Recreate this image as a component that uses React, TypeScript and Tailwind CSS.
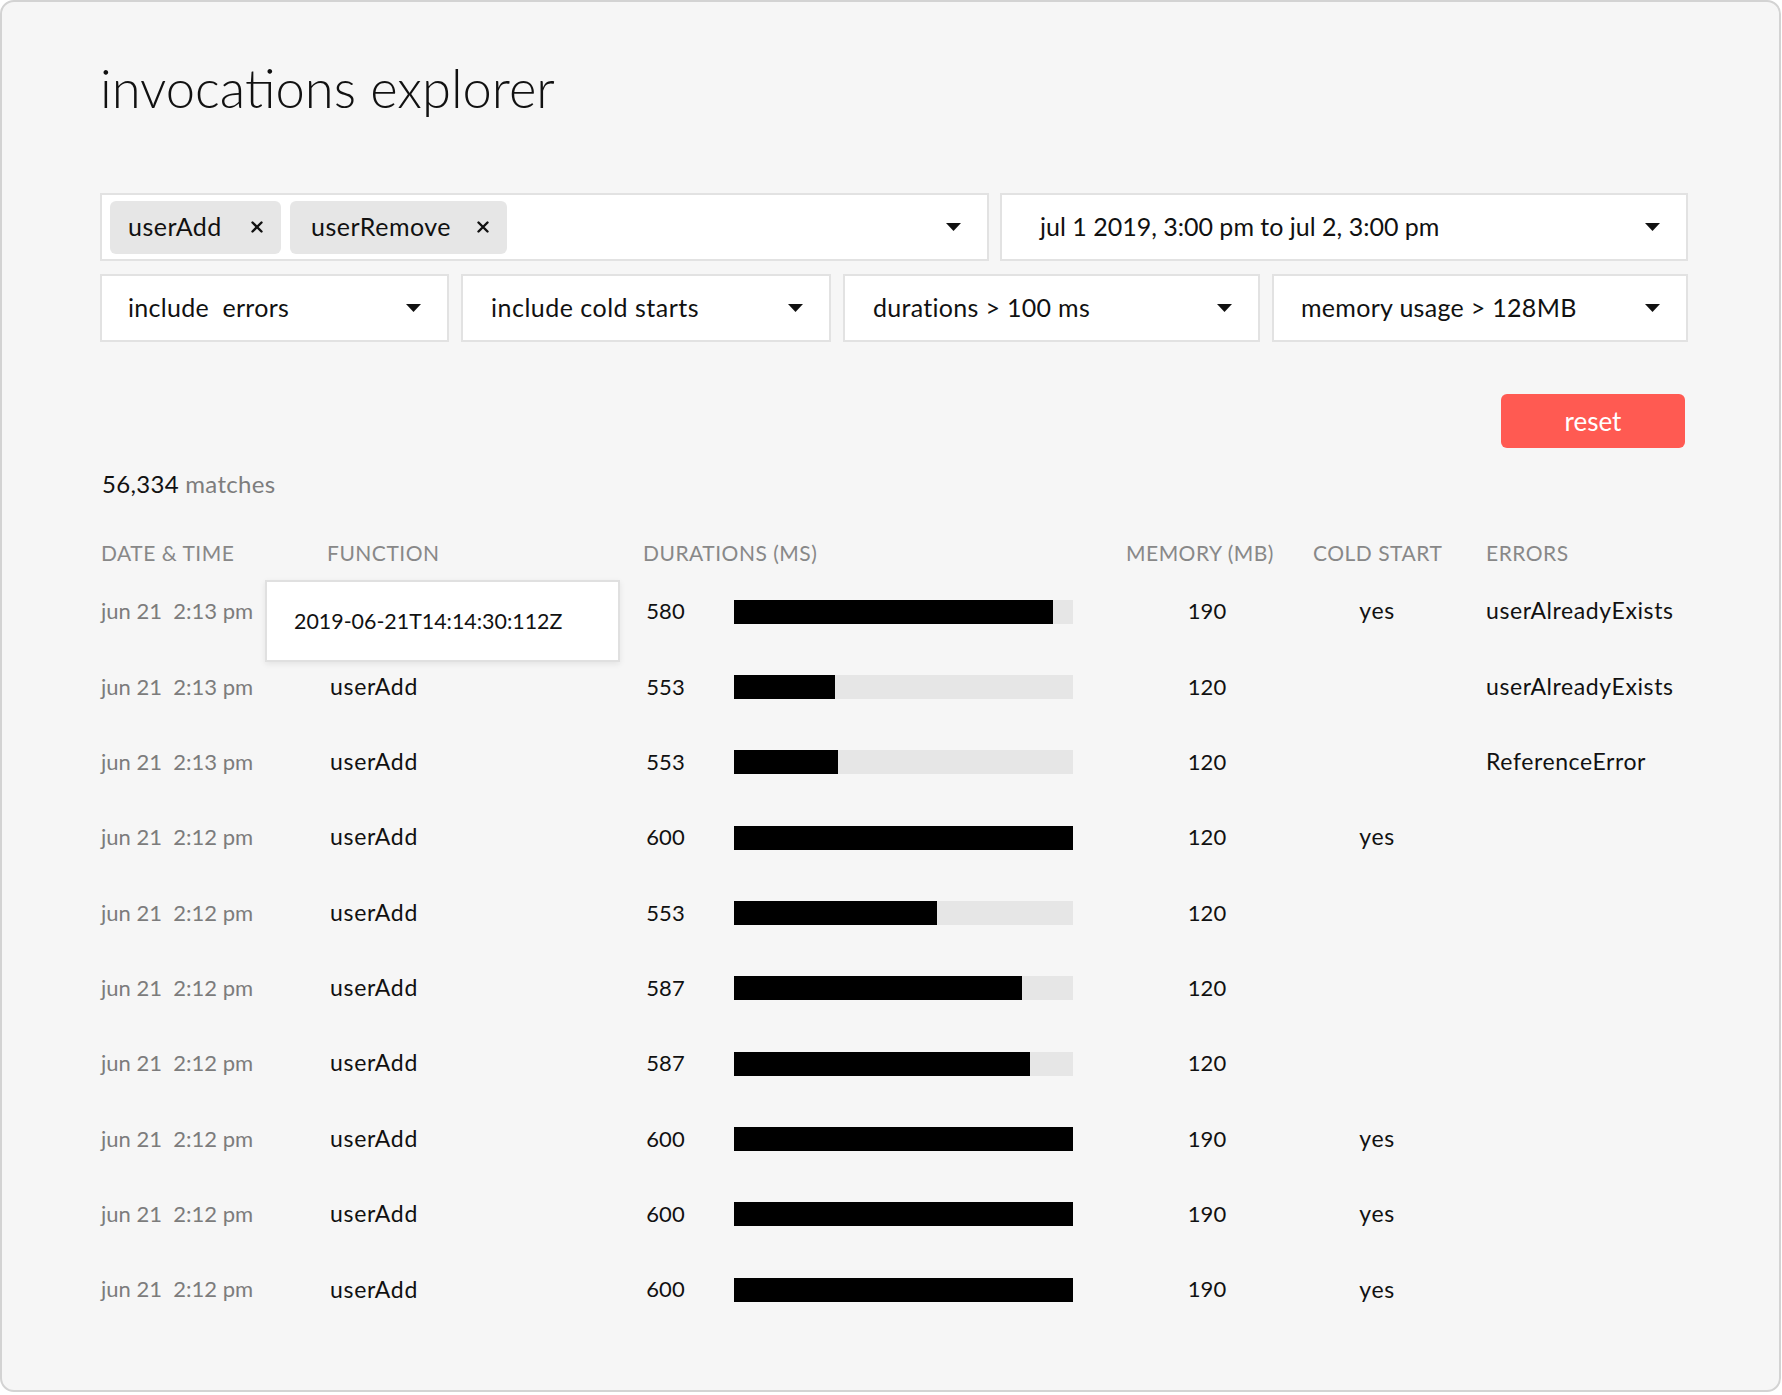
import React from "react";

type Row = {
  d: string;
  f: string;
  ms: number;
  p: number;
  mem: number;
  cold: boolean;
  err: string;
};

const rows: Row[] = [
  { d: "jun 21  2:13 pm", f: "userAdd", ms: 580, p: 0.941, mem: 190, cold: true, err: "userAlreadyExists" },
  { d: "jun 21  2:13 pm", f: "userAdd", ms: 553, p: 0.298, mem: 120, cold: false, err: "userAlreadyExists" },
  { d: "jun 21  2:13 pm", f: "userAdd", ms: 553, p: 0.308, mem: 120, cold: false, err: "ReferenceError" },
  { d: "jun 21  2:12 pm", f: "userAdd", ms: 600, p: 1, mem: 120, cold: true, err: "" },
  { d: "jun 21  2:12 pm", f: "userAdd", ms: 553, p: 0.6, mem: 120, cold: false, err: "" },
  { d: "jun 21  2:12 pm", f: "userAdd", ms: 587, p: 0.85, mem: 120, cold: false, err: "" },
  { d: "jun 21  2:12 pm", f: "userAdd", ms: 587, p: 0.874, mem: 120, cold: false, err: "" },
  { d: "jun 21  2:12 pm", f: "userAdd", ms: 600, p: 1, mem: 190, cold: true, err: "" },
  { d: "jun 21  2:12 pm", f: "userAdd", ms: 600, p: 1, mem: 190, cold: true, err: "" },
  { d: "jun 21  2:12 pm", f: "userAdd", ms: 600, p: 1, mem: 190, cold: true, err: "" },
];

function Caret() {
  return (
    <svg width="15" height="8" viewBox="0 0 15 8" className="shrink-0">
      <polygon points="0,0 15,0 7.5,8" fill="#111" />
    </svg>
  );
}

function Cross() {
  return (
    <svg width="12" height="12" viewBox="0 0 12 12" className="shrink-0">
      <path d="M1.5 1.5 L10.5 10.5 M10.5 1.5 L1.5 10.5" stroke="#111" strokeWidth="2.4" strokeLinecap="round" />
    </svg>
  );
}

function Chip({ label, width, pad }: { label: string; width: string; pad: string }) {
  return (
    <div className={`flex h-[53px] items-center justify-between rounded-[6px] bg-[#e6e6e6] pr-[18px] ${pad} ${width}`}>
      <span className="text-[25px] tracking-[0.5px] text-[#111]">{label}</span>
      <Cross />
    </div>
  );
}

function Select({ label, className, pad, track = "tracking-[0.3px]" }: { label: string; className: string; pad: string; track?: string }) {
  return (
    <div className={`flex h-[68px] items-center justify-between border-2 border-[#e2e2e2] bg-white pr-[26px] ${pad} ${className}`}>
      <span className={`whitespace-pre text-[25px] text-[#111] ${track}`}>{label}</span>
      <Caret />
    </div>
  );
}

export default function App() {
  return (
    <div className="h-[1395px] w-[1782px] bg-white" style={{ fontFamily: "Lato, 'Open Sans', sans-serif" }}>
      <div className="h-[1392px] w-[1781px] rounded-[14px] border-2 border-[#d3d3d3] bg-[#f6f6f6] pl-[98px] pr-[91px]">
        <h1 className="pt-[51px] text-[52.5px] font-light leading-[70px] text-[#111]">invocations explorer</h1>

        <div className="mt-[70px] flex gap-[11px]">
          <div className="flex h-[68px] w-[889px] items-center border-2 border-[#e2e2e2] bg-white pl-[8px] pr-[26px]">
            <div className="flex gap-[9px]">
              <Chip label="userAdd" width="w-[171px]" pad="pl-[18px]" />
              <Chip label="userRemove" width="w-[217px]" pad="pl-[21px]" />
            </div>
            <div className="flex-1" />
            <Caret />
          </div>
          <Select label="jul 1 2019, 3:00 pm to jul 2, 3:00 pm" className="flex-1" pad="pl-[38px]" track="tracking-[0px]" />
        </div>

        <div className="mt-[13px] flex gap-[12px]">
          <Select label="include  errors" className="w-[349px]" pad="pl-[26px]" />
          <Select label="include cold starts" className="w-[370px]" pad="pl-[28px]" track="tracking-[0.5px]" />
          <Select label="durations > 100 ms" className="w-[417px]" pad="pl-[28px]" />
          <Select label="memory usage > 128MB" className="flex-1" pad="pl-[27px]" />
        </div>

        <div className="mt-[52px] flex justify-end pr-[3px]">
          <button className="h-[54px] w-[184px] rounded-[6px] bg-[#ff5a52] text-[26px] text-white">reset</button>
        </div>

        <div className="mt-[21px] pl-[2px] text-[24px] leading-[30px] tracking-[0.3px]">
          <span className="text-[#111]">56,334</span> <span className="text-[#7d7d7d]">matches</span>
        </div>

        <div className="relative mt-[39px] pl-[1px]">
          <div className="flex h-[30px] items-center text-[21px] uppercase tracking-[0.5px] text-[#888]">
            <div className="w-[226px]">Date &amp; Time</div>
            <div className="w-[316px]">Function</div>
            <div className="w-[483px]">Durations (ms)</div>
            <div className="w-[170px]">Memory (MB)</div>
            <div className="w-[190px] pl-[17px]">Cold Start</div>
            <div>Errors</div>
          </div>
          <div className="mt-[5px] flex flex-col">
            {rows.map((r, i) => (
              <div key={i} className="flex h-[75.35px] items-center text-[22px]">
                <div className="w-[226px] whitespace-pre text-[#7c7c7c]">{r.d}</div>
                <div className="w-[316px] pl-[3px] text-[23px] tracking-[0.7px] text-[#111]">{r.f}</div>
                <div className="flex w-[483px] items-center">
                  <div className="w-[45px] text-center text-[#111]">{r.ms}</div>
                  <div className="ml-[46px] mt-[2px] h-[24px] w-[339px] bg-[#e6e6e6]">
                    <div className="h-full bg-black" style={{ width: `${r.p * 100}%` }} />
                  </div>
                </div>
                <div className="w-[170px]">
                  <div className="w-[162px] text-center text-[#111]">{r.mem}</div>
                </div>
                <div className="w-[190px]">
                  <div className="w-[162px] text-center text-[23px] tracking-[0.6px] text-[#111]">{r.cold ? "yes" : ""}</div>
                </div>
                <div className="text-[23px] tracking-[0.6px] text-[#111]">{r.err}</div>
              </div>
            ))}
          </div>

          <div className="absolute left-[165px] top-[42px] flex h-[82px] w-[355px] items-center border-2 border-[#e0e0e0] bg-white pl-[27px] text-[21.4px] text-[#111] shadow-[0_2px_6px_rgba(0,0,0,0.08)]">
            2019-06-21T14:14:30:112Z
          </div>
        </div>
      </div>
    </div>
  );
}
